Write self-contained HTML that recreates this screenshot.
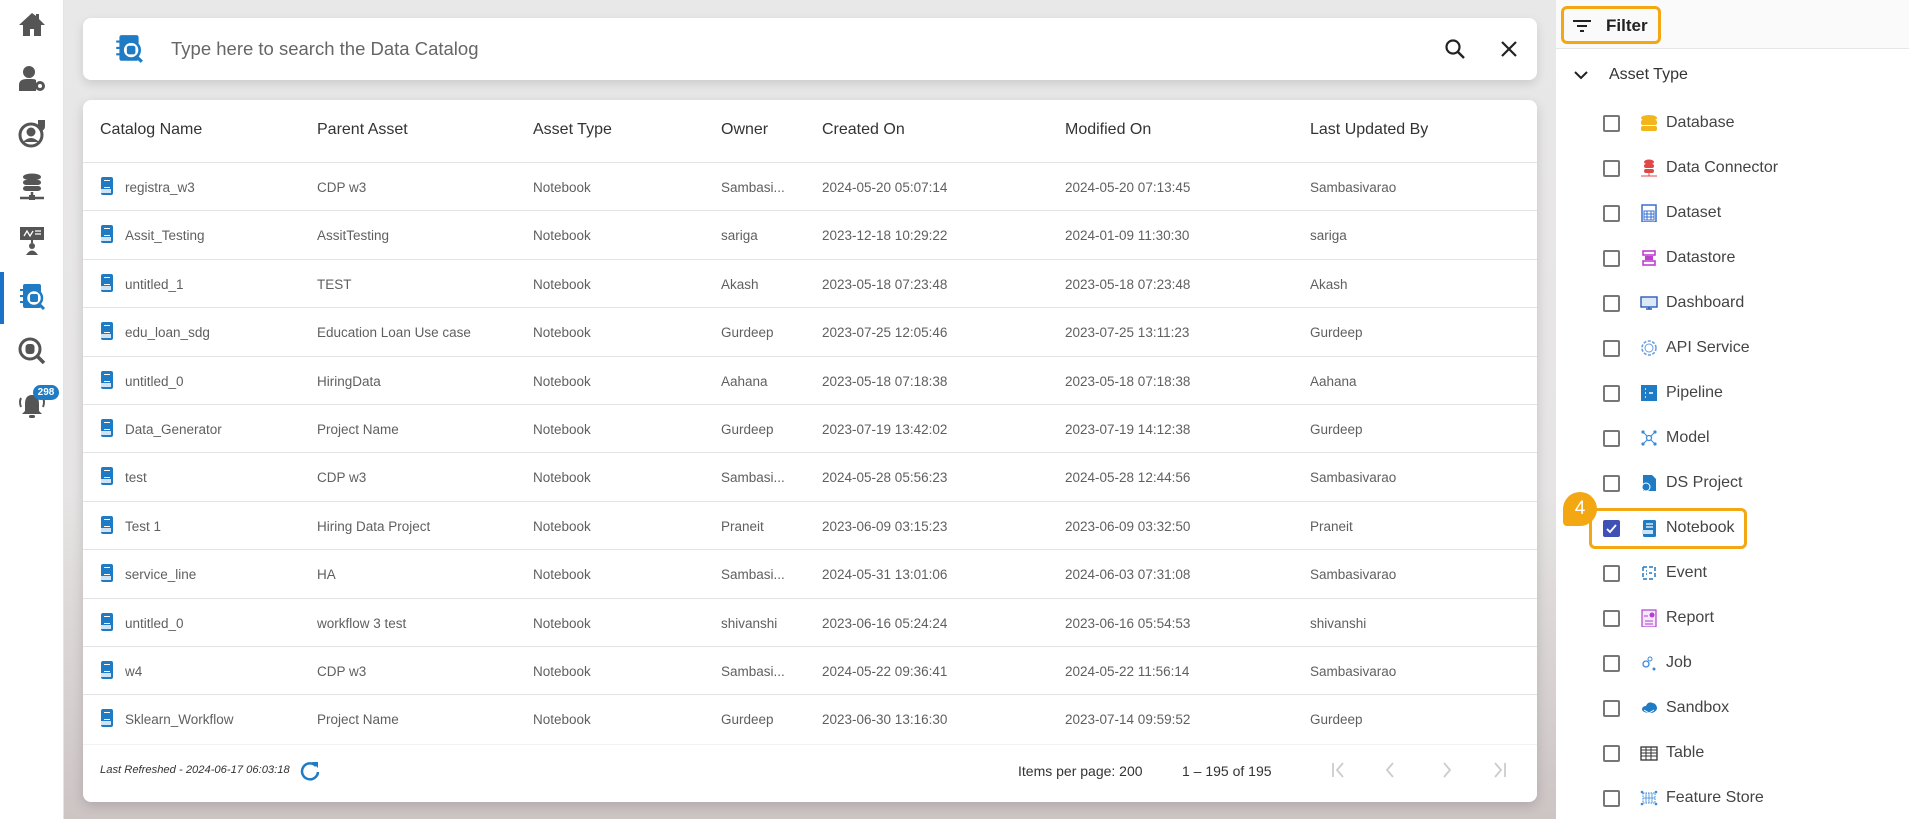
<!DOCTYPE html>
<html><head><meta charset="utf-8">
<style>
*{box-sizing:border-box;margin:0;padding:0}
body{width:1909px;height:819px;overflow:hidden;font-family:"Liberation Sans",sans-serif;background:#e4e1e1;position:relative}
#side{position:absolute;left:0;top:0;width:64px;height:819px;background:#fff;border-right:1px solid #e3e3e3}
#side .ic{position:absolute;left:17px;width:30px;height:30px}
#side .bar{position:absolute;left:0;top:272px;width:4px;height:52px;background:#1a73c8}
#main{position:absolute;left:64px;top:0;width:1492px;height:819px;background:linear-gradient(#e9e8e8,#e6e4e4 60%,#cdc4c4)}
#search{position:absolute;left:19px;top:18px;width:1454px;height:62px;background:#fff;border-radius:8px;box-shadow:0 4px 10px rgba(0,0,0,.12)}
#search .ph{position:absolute;left:88px;top:20px;font-size:18.5px;color:#666}
#card{position:absolute;left:19px;top:100px;width:1454px;height:702px;background:#fff;border-radius:8px;box-shadow:0 4px 12px rgba(0,0,0,.15);overflow:hidden}
.row{position:absolute;left:0;width:1454px;height:48.4px;border-bottom:1px solid #e4e4e4;font-size:13.5px;color:#5f5f5f}
.row span{position:absolute;top:17px;white-space:nowrap}
.hdr{font-size:16px;color:#333;height:63px}
.hdr span{top:21px}
.nb{position:absolute;left:18px;top:14px;width:12px;height:18px;background:#1e7bc4;border-radius:2px}
.nb:before{content:"";position:absolute;left:3px;top:3px;width:6px;height:6px;border-top:1.5px solid #fff;border-bottom:1.5px solid #fff}
.nb:after{content:"";position:absolute;left:0px;top:12px;width:10px;height:4px;background:#cfe3f3}
#panel{position:absolute;left:1556px;top:0;width:353px;height:819px;background:#fff}
#fh{height:49px;border-bottom:1px solid #e6e6e6;background:#fafafa;position:relative}
#fbox{position:absolute;left:5px;top:6px;width:100px;height:38px;border:3px solid #f3a712;border-radius:6px}
#fbox b{position:absolute;left:42px;top:7px;font-size:17px;color:#222}
.it{position:absolute;left:0;height:30px;width:353px;font-size:16px;color:#444}
.cb{position:absolute;left:47px;top:7px;width:17px;height:17px;border:2px solid #777;border-radius:2px}
.it .t{position:absolute;left:110px;top:6px}
.it .i{position:absolute;left:84px;top:6px;width:18px;height:18px}
</style></head><body>
<div id="side">
 <svg class="ic" style="top:10px" viewBox="0 0 30 30"><path d="M15 3 L2 15 h4 v11 h7 v-7 h4 v7 h7 V15 h4 L22 9 V4 h-3 v2z" fill="#555"/></svg>
 <svg class="ic" style="top:64px" viewBox="0 0 30 30"><circle cx="12" cy="8" r="6" fill="#555"/><path d="M2 27 v-6 q0-6 8-6 h5 q3 0 4 1 v11z" fill="#555"/><circle cx="23" cy="22" r="5" fill="#555"/><circle cx="23" cy="22" r="2" fill="#fff"/></svg>
 <svg class="ic" style="top:118px" viewBox="0 0 30 30"><circle cx="14" cy="17" r="11" fill="none" stroke="#555" stroke-width="3"/><circle cx="14" cy="14" r="4.5" fill="#555"/><path d="M6 24 q8-8 16 0" fill="#555"/><path d="M21 2 h7 v6 q0 4-3.5 5 q-3.5-1-3.5-5z" fill="#555"/></svg>
 <svg class="ic" style="top:172px" viewBox="0 0 30 30"><ellipse cx="15" cy="5" rx="9" ry="3.5" fill="#555"/><rect x="6" y="8" width="18" height="5" rx="3" fill="#555"/><rect x="6" y="14" width="18" height="5" rx="3" fill="#555"/><path d="M15 20 v5 M3 26 h24" stroke="#555" stroke-width="2.5"/><rect x="12" y="23" width="6" height="5" fill="#555"/></svg>
 <svg class="ic" style="top:226px" viewBox="0 0 30 30"><rect x="3" y="1" width="24" height="13" fill="#555"/><path d="M7 10 l3-5 3 5 3-5 M18 5h6 M18 8h6" stroke="#fff" stroke-width="1.3" fill="none"/><path d="M15 14 v3" stroke="#555" stroke-width="2"/><circle cx="15" cy="20" r="3" fill="#555"/><path d="M9 29 q6-9 12 0z" fill="#555"/></svg>
 <div class="bar"></div>
 <svg class="ic" style="top:282px" viewBox="0 0 30 30"><rect x="6" y="2" width="18" height="24" rx="2" fill="#1e7bc4"/><circle cx="17" cy="16" r="8" fill="#fff" stroke="#1e7bc4" stroke-width="2.5"/><rect x="13" y="12" width="8" height="8" rx="2" fill="#1e7bc4"/><path d="M22 22 l5 5" stroke="#1e7bc4" stroke-width="3"/><path d="M3 8h5M3 14h4M3 20h4" stroke="#1e7bc4" stroke-width="2"/></svg>
 <svg class="ic" style="top:336px" viewBox="0 0 30 30"><circle cx="13" cy="13" r="10" fill="none" stroke="#555" stroke-width="3"/><rect x="8.5" y="8" width="9" height="10" rx="3" fill="#555"/><path d="M20 20 l7 7" stroke="#555" stroke-width="3.5"/></svg>
 <svg class="ic" style="top:390px" viewBox="0 0 30 30"><path d="M15 5 q-7 0-7 9 v7 l-3 3 h20 l-3-3 v-7 q0-9-7-9z" fill="#555"/><rect x="12" y="25" width="6" height="3" rx="1.5" fill="#555"/><path d="M4 8 q-2 4 0 9 M26 8 q2 4 0 9" stroke="#555" stroke-width="2" fill="none"/></svg>
 <div style="position:absolute;left:33px;top:385px;width:26px;height:15px;border-radius:8px;background:#1e7bc4;color:#fff;font-size:10px;font-weight:bold;text-align:center;line-height:15px">298</div>
</div>
<div id="main">
 <div id="search">
  <svg style="position:absolute;left:30px;top:14px" width="32" height="34" viewBox="0 0 30 30"><rect x="6" y="2" width="18" height="24" rx="2" fill="#1e7bc4"/><circle cx="17" cy="16" r="8" fill="#fff" stroke="#1e7bc4" stroke-width="2.5"/><rect x="13" y="12" width="8" height="8" rx="2" fill="#1e7bc4"/><path d="M22 22 l5 5" stroke="#1e7bc4" stroke-width="3"/><path d="M3 8h5M3 14h4M3 20h4" stroke="#1e7bc4" stroke-width="2"/></svg>
  <div class="ph">Type here to search the Data Catalog</div>
  <svg style="position:absolute;left:1361px;top:20px" width="22" height="22" viewBox="0 0 22 22"><circle cx="9" cy="9" r="6.5" fill="none" stroke="#222" stroke-width="2.2"/><path d="M14 14 l6 6" stroke="#222" stroke-width="2.4"/></svg>
  <svg style="position:absolute;left:1417px;top:22px" width="18" height="18" viewBox="0 0 18 18"><path d="M2 2 L16 16 M16 2 L2 16" stroke="#222" stroke-width="2.2"/></svg>
 </div>
 <div id="card">
  <div class="row hdr" style="top:0"><span style="left:17px">Catalog Name</span><span style="left:234px">Parent Asset</span><span style="left:450px">Asset Type</span><span style="left:638px">Owner</span><span style="left:739px">Created On</span><span style="left:982px">Modified On</span><span style="left:1227px">Last Updated By</span></div>
  <div id="rows"></div>
  <div style="position:absolute;left:0;top:644px;width:1454px;height:1px;background:#f2f2f2"></div>
  <div style="position:absolute;left:17px;top:664px;font-size:11.2px;font-style:italic;color:#333">Last Refreshed - 2024-06-17 06:03:18</div>
  <svg style="position:absolute;left:216px;top:660px" width="22" height="22" viewBox="0 0 22 22"><path d="M17 6 A8 8 0 1 0 19 12" fill="none" stroke="#1e7bc4" stroke-width="2.5"/><path d="M13 2 h6 v6z" fill="#1e7bc4"/></svg>
  <div style="position:absolute;left:935px;top:663px;font-size:14px;color:#333">Items per page: 200</div>
  <div style="position:absolute;left:1099px;top:663px;font-size:14px;color:#333">1 – 195 of 195</div>
  <svg style="position:absolute;left:1247px;top:660px" width="200" height="20" viewBox="0 0 200 20" stroke="#ccc" stroke-width="1.8" fill="none"><path d="M3 3v14M13 3l-6 7 6 7"/><path d="M63 3l-6 7 6 7"/><path d="M114 3l6 7-6 7"/><path d="M165 3l6 7-6 7M175 3v14"/></svg>
 </div>
</div>
<div id="panel">
 <div id="fh"><div id="fbox"><svg style="position:absolute;left:8px;top:9px" width="20" height="16" viewBox="0 0 20 16"><path d="M1 3h18M5 8h10M8 13h4" stroke="#222" stroke-width="2"/></svg><b>Filter</b></div></div>
 <svg style="position:absolute;left:18px;top:70px" width="14" height="10" viewBox="0 0 14 10"><path d="M1 2l6 6 6-6" stroke="#222" stroke-width="2" fill="none"/></svg>
 <div style="position:absolute;left:53px;top:66px;font-size:16px;color:#333">Asset Type</div>
 <div id="items"></div>
 <div style="position:absolute;left:33px;top:508px;width:158px;height:41px;border:3px solid #f3a712;border-radius:6px"></div>
 <div style="position:absolute;left:7px;top:492px;width:34px;height:34px;border-radius:17px 17px 17px 4px;background:#f3a712;color:#fff;font-size:19px;text-align:center;line-height:34px">4</div>
</div>
<script>
var d=[["registra_w3","CDP w3","Sambasi...","2024-05-20 05:07:14","2024-05-20 07:13:45","Sambasivarao"],
["Assit_Testing","AssitTesting","sariga","2023-12-18 10:29:22","2024-01-09 11:30:30","sariga"],
["untitled_1","TEST","Akash","2023-05-18 07:23:48","2023-05-18 07:23:48","Akash"],
["edu_loan_sdg","Education Loan Use case","Gurdeep","2023-07-25 12:05:46","2023-07-25 13:11:23","Gurdeep"],
["untitled_0","HiringData","Aahana","2023-05-18 07:18:38","2023-05-18 07:18:38","Aahana"],
["Data_Generator","Project Name","Gurdeep","2023-07-19 13:42:02","2023-07-19 14:12:38","Gurdeep"],
["test","CDP w3","Sambasi...","2024-05-28 05:56:23","2024-05-28 12:44:56","Sambasivarao"],
["Test 1","Hiring Data Project","Praneit","2023-06-09 03:15:23","2023-06-09 03:32:50","Praneit"],
["service_line","HA","Sambasi...","2024-05-31 13:01:06","2024-06-03 07:31:08","Sambasivarao"],
["untitled_0","workflow 3 test","shivanshi","2023-06-16 05:24:24","2023-06-16 05:54:53","shivanshi"],
["w4","CDP w3","Sambasi...","2024-05-22 09:36:41","2024-05-22 11:56:14","Sambasivarao"],
["Sklearn_Workflow","Project Name","Gurdeep","2023-06-30 13:16:30","2023-07-14 09:59:52","Gurdeep"]];
var h="";d.forEach(function(r,i){h+='<div class="row" style="top:'+(63+i*48.4)+'px'+(i==11?';border-bottom:none':'')+'"><i class="nb"></i><span style="left:42px">'+r[0]+'</span><span style="left:234px">'+r[1]+'</span><span style="left:450px">Notebook</span><span style="left:638px">'+r[2]+'</span><span style="left:739px">'+r[3]+'</span><span style="left:982px">'+r[4]+'</span><span style="left:1227px">'+r[5]+'</span></div>';});
document.getElementById("rows").innerHTML=h;
var ic={Database:'<ellipse cx="9" cy="4" rx="8" ry="3" fill="#f2b51c"/><rect x="1" y="6" width="16" height="5" rx="2" fill="#f2b51c"/><rect x="1" y="12" width="16" height="5" rx="2" fill="#f2b51c"/>',
"Data Connector":'<ellipse cx="9" cy="3" rx="5" ry="2.5" fill="#e04848"/><rect x="4" y="5" width="10" height="4" rx="2" fill="#e04848"/><rect x="4" y="10" width="10" height="4" rx="2" fill="#e04848"/><path d="M1 17h16M9 14v3" stroke="#e04848"/>',
Dataset:'<rect x="2" y="1" width="14" height="17" fill="none" stroke="#3a6fd0" stroke-width="1.5"/><path d="M4 7h10v9H4zM4 10h10M4 13h10M7 7v9M11 7v9" stroke="#3a6fd0" fill="none"/>',
Datastore:'<rect x="3" y="2" width="12" height="4" fill="none" stroke="#c040d0" stroke-width="1.6"/><rect x="3" y="12" width="12" height="4" fill="none" stroke="#c040d0" stroke-width="1.6"/><rect x="5" y="7" width="8" height="4" fill="#c040d0"/>',
Dashboard:'<rect x="1" y="3" width="16" height="10" fill="#dde8f7" stroke="#2a5bb8" stroke-width="1.4"/><path d="M6 15h6M9 13v2" stroke="#2a5bb8" stroke-width="1.5"/>',
"API Service":'<circle cx="9" cy="9" r="7" fill="none" stroke="#6a9de0" stroke-width="1.6" stroke-dasharray="3 1.5"/><circle cx="9" cy="9" r="4" fill="none" stroke="#6a9de0"/>',
Pipeline:'<rect x="1" y="1" width="16" height="16" fill="#1e7bc4"/><path d="M5 5h1M5 9h1M5 13h1M9 9h4" stroke="#fff" stroke-width="1.5"/>',
Model:'<circle cx="9" cy="9" r="2.5" fill="none" stroke="#3a8ad8" stroke-width="1.3"/><path d="M3 3l4 4M15 3l-4 4M3 15l4-4M15 15l-4-4" stroke="#3a8ad8"/><circle cx="3" cy="3" r="1.6" fill="#3a8ad8"/><circle cx="15" cy="3" r="1.6" fill="#3a8ad8"/><circle cx="3" cy="15" r="1.6" fill="#3a8ad8"/><circle cx="15" cy="15" r="1.6" fill="#3a8ad8"/>',
"DS Project":'<path d="M3 1h9l4 4v12H3z" fill="#1e7bc4"/><circle cx="6" cy="13" r="4" fill="#1e7bc4" stroke="#fff"/>',
Notebook:'<rect x="3" y="1" width="13" height="17" rx="1.5" fill="#1e7bc4"/><path d="M6 5h7M6 8h7" stroke="#fff" stroke-width="1.3"/><rect x="2" y="11" width="11" height="4" fill="#cfe3f3"/>',
Event:'<path d="M3 3h12M3 15h12M3 3v12M15 3v12" stroke="#1e7bc4" stroke-width="1.5" stroke-dasharray="4 2"/><path d="M6 7h1M6 10h1M9 9h3" stroke="#1e7bc4" stroke-width="1.5"/>',
Report:'<rect x="2" y="1" width="14" height="17" fill="#f5e6fa" stroke="#b040d0" stroke-width="1.2"/><circle cx="12" cy="6" r="2.5" fill="#b040d0"/><path d="M5 12h8M5 15h8M4 7h4" stroke="#b040d0"/>',
Job:'<circle cx="6" cy="10" r="3" fill="none" stroke="#3a8ad8" stroke-width="1.3"/><circle cx="10" cy="5" r="2" fill="none" stroke="#3a8ad8"/><circle cx="14" cy="15" r="1.5" fill="#3a8ad8"/>',
Sandbox:'<path d="M2 11 q0-4 4-4 q2-5 7-3 q4 1 4 6 q-2 4-7 4 q-6 0-8-3z" fill="#1e7bc4"/><path d="M4 11l5 3 5-3" stroke="#fff" fill="none"/>',
Table:'<rect x="1" y="3" width="16" height="13" fill="none" stroke="#333" stroke-width="1.3"/><path d="M1 6h16M1 9h16M1 12h16M6 3v13M11 3v13" stroke="#333"/>',
"Feature Store":'<rect x="3" y="4" width="12" height="10" fill="none" stroke="#3a8ad8" stroke-dasharray="1.5 1"/><path d="M6 4v10M9 4v10M12 4v10M3 9h12" stroke="#3a8ad8" stroke-width=".8"/><circle cx="2" cy="3" r="1.3" fill="#3a8ad8"/><circle cx="16" cy="3" r="1.3" fill="#3a8ad8"/><circle cx="2" cy="15" r="1.3" fill="#3a8ad8"/><circle cx="16" cy="15" r="1.3" fill="#3a8ad8"/>'};
var h2="",i=0;for(var k in ic){var ch=k=="Notebook";h2+='<div class="it" style="top:'+(108+i*45)+'px">'+(ch?'<div class="cb" style="background:#3f51b5;border-color:#3f51b5"><svg width="13" height="13" viewBox="0 0 13 13" style="position:absolute;left:0;top:0"><path d="M2 7l3 3 6-7" stroke="#fff" stroke-width="1.8" fill="none"/></svg></div>':'<div class="cb"></div>')+'<svg class="i" viewBox="0 0 18 18">'+ic[k]+'</svg><span class="t">'+k+'</span></div>';i++;}
document.getElementById("items").innerHTML=h2;
</script>
</body></html>
